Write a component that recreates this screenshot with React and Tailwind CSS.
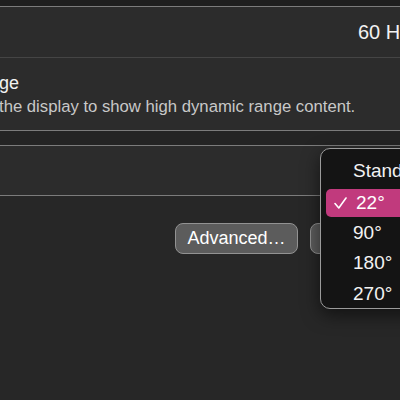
import React from 'react';

const options = ['Standard', '22°', '90°', '180°', '270°'];

const Check = () => (
  <svg width="13" height="12" viewBox="0 0 13 12" className="shrink-0">
    <polyline points="1,6.5 4.8,11 12,1" fill="none" stroke="#ffffff" strokeWidth="1.6" strokeLinecap="round" strokeLinejoin="round" />
  </svg>
);

const RotationMenu = () => {
  const selected = '22°';
  return (
    <div className="absolute left-[320px] top-[148px] w-[110px] h-[161px] rounded-[10px] border border-[#9b9b9b] bg-[#141414] shadow-[0_6px_18px_rgba(0,0,0,0.55)] overflow-hidden pt-[6px] px-[5px]">
      {options.map((opt, i) => {
        const active = opt === selected;
        const h = i < 2 ? 'h-[32px]' : i === 2 ? 'h-[29px]' : 'h-[31px]';
        return (
          <div key={opt} className={`${h} flex items-center`}>
            {active ? (
              <div className="w-full h-[28px] rounded-[5px] bg-[#c13a7d] flex items-center pl-[8px]">
                <Check />
                <span className="ml-[9px] text-[19px] text-white whitespace-nowrap">{opt}</span>
              </div>
            ) : (
              <span className="pl-[27px] text-[19px] text-[#f2f2f2] whitespace-nowrap">{opt}</span>
            )}
          </div>
        );
      })}
    </div>
  );
};

const App = () => {
  return (
    <div
      className="relative w-[400px] h-[400px] overflow-hidden bg-[#272727] text-white"
      style={{ fontFamily: '"Liberation Sans", Arial, sans-serif' }}
    >
      <div className="h-[6px] bg-[#1f1f1f]" />

      {/* display group */}
      <div className="-mx-[10px] border-y border-[#7c7c7c] bg-[#2c2c2c]">
        <div className="h-[50px] flex items-center pl-[368px] text-[20px] text-[#f2f2f2] whitespace-nowrap">
          60 Hz
        </div>
        <div className="h-[73px] border-t border-[#454545] pl-[9px] pt-[15px]">
          <div className="text-[18px] leading-[21px] text-[#f2f2f2]">ge</div>
          <div className="mt-[3px] text-[16.7px] leading-[20px] text-[#c8c8c8] whitespace-nowrap">
            the display to show high dynamic range content.
          </div>
        </div>
      </div>

      <div className="h-[14px] bg-[#242424]" />

      {/* rotation group */}
      <div className="-mx-[10px] h-[51px] border-y border-[#7c7c7c] bg-[#2c2c2c]" />

      <div className="mt-[27px] pl-[175px] flex gap-[12px]">
        <button className="shrink-0 w-[123px] h-[31px] rounded-[8px] border border-[#929292] bg-[#5c5c5c] text-[18px] text-white">
          Advanced…
        </button>
        <button className="shrink-0 w-[124px] h-[31px] rounded-[8px] border border-[#929292] bg-[#5c5c5c] text-[18px] text-white">
          Night Shift…
        </button>
      </div>

      <RotationMenu />
    </div>
  );
};

export default App;
